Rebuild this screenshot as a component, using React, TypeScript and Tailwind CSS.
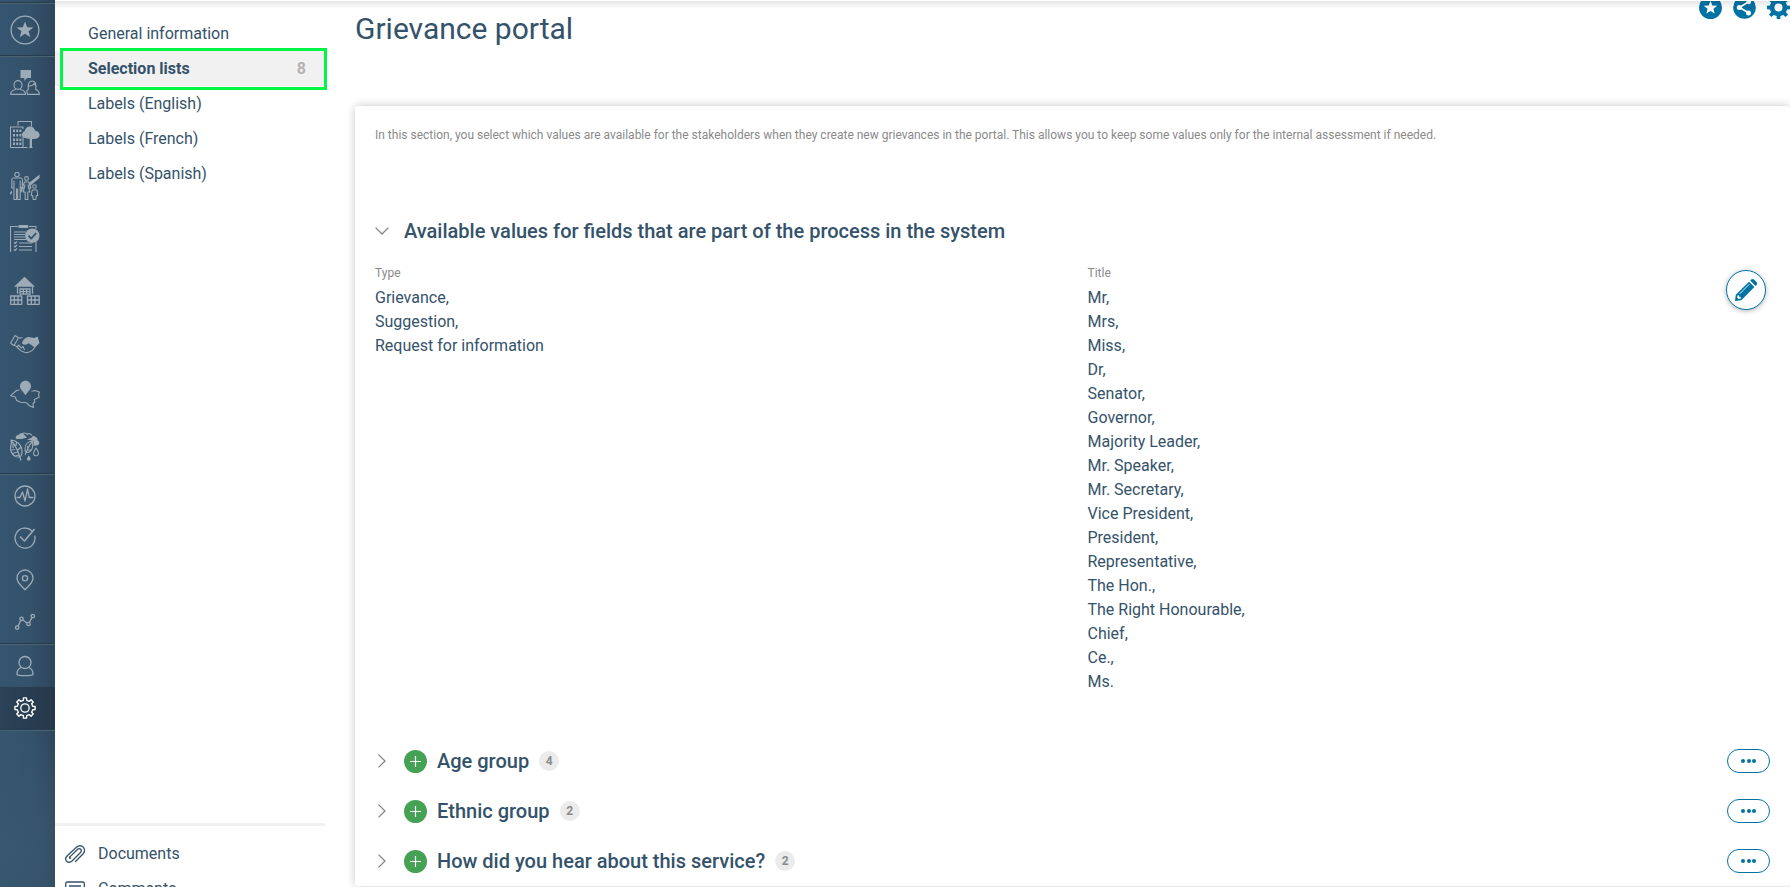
import { useState } from 'react';
import type { ReactNode } from 'react';
import clsx from 'clsx';

const railModules: { id: string; icon: ReactNode }[] = [
  {
    id: 'stakeholders',
    icon: (
      <>
        <path d="M10.5 2h10.5v8h-4l-2.6 3V10h-3.900z" fill="currentColor" stroke="none" />
        <ellipse cx="8" cy="17" rx="4" ry="4.400" />
        <path d="M.6 26.400c0-3.200 2-4.300 5.400-5.200M10 21.200c3.500.9 5.600 2 5.600 5.200H.6" />
        <path d="M18.500 21.500c-.8-4.600 0-8.500 3.600-8.500s4.500 4 3.600 8.500c2 .6 3.600 2 3.600 4.900H17.500c0-1.500-.4-2.800-1-3.700M16.500 22.700l2-1.200M18.500 18c3 .2 5-1 5.600-2.600.4 1.500 1 2 1.700 2.600" />
      </>
    ),
  },
  {
    id: 'environment',
    icon: (
      <>
        <path d="M8 5.500V1.500h13.500v5M.5 27.500V7h12.500v2M.5 27.500h17M13 16v11" />
        <path d="M3 9.500h2v2.500H3zM6.200 9.500h2v2.500h-2zM9.400 9.500h2v2.500h-2zM3 14h2v2.500H3zM6.200 14h2v2.500h-2zM9.400 14h2v2.500h-2zM3 18.500h2v2.500H3zM6.200 18.500h2v2.500h-2zM9.400 18.500h2v2.500h-2zM3 22.500h2v2.500H3zM6.200 22.500h2v2.500h-2zM9.400 22.500h2v2.500h-2z" fill="currentColor" stroke="none" />
        <path d="M12 14.500c-.2-2 2-2.800 2.800-3.500.2-2.500 2.600-4.400 5.200-4.400 2.800 0 4.600 1.600 5 4.200 2.600 0 4.600 2.200 4.600 4.200 0 2.600-2.400 4-7.600 4v7.500c0 .8.400 1 1.200 1.500h-4.700c.8-.5 1.200-.7 1.200-1.500V18.500c-3.700.8-7.700-1-7.700-4z" fill="currentColor" stroke="none" />
      </>
    ),
  },
  {
    id: 'community',
    icon: (
      <>
        <circle cx="7" cy="2.500" r="2.200" />
        <path d="M3 6h8c1 0 1.400 1 1.400 2v7.500h-2.200V9v18.500H7.700V17H6.500v10.500H4V9v7H1.800V8c0-1 .4-2 1.200-2z" />
        <circle cx="16.500" cy="6.500" r="1.900" />
        <path d="M14.500 10h4.200l2.200 6-1.500.6L18 13l1.800 7h-2v7.500h-2.600V20h-2l1.700-7-1.300 3.600-1.500-.6z" />
        <circle cx="24.500" cy="14.500" r="1.800" />
        <path d="M22.200 18h4.800l.8 5.500h-1.500l-.5 4h-2.600l-.5-4h-1.500z" />
        <path d="M0 20.500l2-2v2.500L.5 23zM29.500 2.500v3.500L20 14l-1-3zM10.500 17l2-2v4l-2 2z" fill="currentColor" stroke="none" />
      </>
    ),
  },
  {
    id: 'compliance',
    icon: (
      <>
        <path d="M.5 28V2.500h7.500M18.500 2.500H26V5M26 17v11M4 8h12M4 10.500h11M4 13h11M4 15.500h12M9 19h13M9 22.500h13M9 26h13M4 18.500l1 1 2-2M4 22l1 1 2-2M4 25.500l1 1 2-2" />
        <path d="M8.500 1h9.500v3H8.500z" fill="currentColor" stroke="none" />
        <circle cx="22.300" cy="11.700" r="7.200" fill="currentColor" stroke="none" />
        <path d="M18.500 11.700l2.700 2.900 5-5.600" stroke="#34526a" strokeWidth="1.800" />
      </>
    ),
  },
  {
    id: 'housing',
    icon: (
      <>
        <path d="M14.500.8L25 10.800H4z" fill="currentColor" stroke="none" />
        <path d="M7.500 10.800v7M22.500 10.800v7M10 13h10v5.200H10zM13.300 13v5M16.600 13v5M10 15.600h10M.7 20h11v8.300H.7zM4.300 20v8.300M8 20v8.300M.7 24h11M17.500 20h11.700v8.300H17.500zM21.300 20v8.300M25 20v8.300M17.500 24h11.700" strokeWidth="1.300" />
      </>
    ),
  },
  {
    id: 'agreements',
    icon: (
      <>
        <path d="M5 7.500l3.500 2.300-4.500 7.700-3.400-2.200zM8.500 10l4-.2M4.500 17.300c2 .6 3 2.500 5 4.300 2.400 2 5.200 3.500 7.400 3 3-.5 6.800-2.700 7.800-5.700M7 19l2-2 2 3 2-1.500 1.500 3.500" />
        <path d="M12 15.500c.5-3.500 3.500-6 6.500-6.500l6 1 3-1.500 2 6.500-4.500 4.500-6.300-4.200c-2 1.600-4.500 2-6.700.2z" fill="currentColor" stroke="none" />
      </>
    ),
  },
  {
    id: 'land',
    icon: (
      <>
        <path d="M9.500 10l-3 .5-5.800 5.200 4.500 1.300 1.500 3.500 3.800 1.800 6 .5 3 3 4 1.700-.5-4 1.800-1.500-.5-2.500 4.800-2.300-.5-3 .7-2.200-4.300-1.500-3.500.7" />
        <path d="M15.500.8c3.300 0 5.500 2.500 5.500 5.500 0 3.700-3.500 5.500-5.500 9-2-3.500-5.500-5.300-5.500-9 0-3 2.200-5.500 5.500-5.500z" fill="currentColor" stroke="none" />
      </>
    ),
  },
  {
    id: 'biodiversity',
    icon: (
      <>
        <path d="M1 8c5.500.5 11 4.500 11 11.500 0 3.500-1.500 5.500-3.500 5.500C3 25 .2 20 .6 15.500.8 12.500 2 11 1 8zM1.500 9c4 4 7 11 9.500 19.500M3 12v4M6 14l.5-4M5 17.500l-3.500.5M7.500 20l-5 1.500M8 18l3-3M9 23l-4 1" strokeWidth="1.200" />
        <path d="M22.500 9c-4.500.5-7.500 3.500-7.500 7.500 0 2.500 1 4 2 4 4 0 6.500-3.500 5.500-11.500zM22 10c-3 3-5 8-7 13M17 14l1 2M18 18h3" />
        <path d="M6 7c-1-2 .5-4 2.500-4C10 .8 12.500.8 14 2.500L17 5.500 12 7zM17 7.500l4-1.500 2-2c3 0 5 2.500 4.500 4.500 2.500.5 2.500 4.500-.5 5l-3.500.3V9zM18.800 23.500c-1 1.500-1.800 2.400-1.800 3.500a1.800 1.800 0 003.600 0c0-1.100-.8-2-1.800-3.500z" fill="currentColor" stroke="none" />
        <path d="M12 2c2-1.800 4-1 5 .3 1.500-1.200 4-.8 5 1.200M26 16c-1.500 2.500-2.500 3.700-2.500 5.300a2.500 2.500 0 005 0c0-1.600-1-2.800-2.500-5.300z" />
      </>
    ),
  },
];

const railTools: { id: string; icon: ReactNode }[] = [
  {
    id: 'monitoring',
    icon: (
      <>
        <circle cx="11" cy="11" r="10" />
        <path d="M2.500 12.500H6L8.500 7l2.500 9 2.500-12 1.800 8.500h4" />
      </>
    ),
  },
  {
    id: 'tasks',
    icon: (
      <>
        <path d="M18.300 4.200A10 10 0 1020.700 8.500" />
        <path d="M6 9.500l4.500 4.500L20.500 2" strokeWidth="1.500" />
      </>
    ),
  },
  {
    id: 'locations',
    icon: (
      <>
        <path d="M11 20.800c-2-2.800-8-6.300-8-11.800a8 8 0 0116 0c0 5.500-6 9-8 11.800z" />
        <circle cx="11" cy="9.300" r="2.600" />
      </>
    ),
  },
  {
    id: 'analytics',
    icon: (
      <>
        <circle cx="3.200" cy="16.500" r="1.700" />
        <circle cx="7.500" cy="7.800" r="1.700" />
        <circle cx="14.500" cy="13" r="1.700" />
        <circle cx="18.800" cy="5" r="1.700" />
        <path d="M4 15l2.800-5.500M9 9l4 3M15.300 11.500L18 6.600" />
      </>
    ),
  },
];

function RailIcon({ children, small }: { children: ReactNode; small?: boolean }) {
  return (
    <svg
      viewBox={small ? '0 0 22 22' : '0 0 30 30'}
      className={small ? 'h-[22px] w-[22px]' : 'h-[30px] w-[30px]'}
      fill="none"
      stroke="currentColor"
      strokeWidth={small ? 1.3 : 1.1}
      strokeLinejoin="round"
    >
      {children}
    </svg>
  );
}

function RailDivider() {
  return <div className="h-0.5 shrink-0 border-t border-t-[#263c4f] border-b border-b-[#4b626f]"></div>;
}

function gearPath(cx: number, cy: number, inner: number, outer: number, teeth: number) {
  const points: string[] = [];
  for (let i = 0; i < teeth; i++) {
    const base = (i / teeth) * Math.PI * 2 - Math.PI / 2;
    const half = Math.PI / teeth;
    [
      [inner, -half * 0.55],
      [outer, -half * 0.38],
      [outer, half * 0.38],
      [inner, half * 0.55],
    ].forEach(([r, offset]) => {
      points.push(`${(cx + r * Math.cos(base + offset)).toFixed(2)} ${(cy + r * Math.sin(base + offset)).toFixed(2)}`);
    });
  }
  return `M${points.join('L')}Z`;
}

function Rail() {
  return (
    <aside className="flex h-full w-[55px] shrink-0 flex-col bg-[linear-gradient(90deg,#355470_0%,#34526a_55%,#2e455c_100%)] text-[#9dabb6]">
      <div className="h-0.5"></div>
      <RailDivider />
      <div className="flex h-[51px] w-[50px] items-center justify-center">
        <RailIcon>
          <circle cx="15" cy="15" r="13.900" strokeWidth="1.300" />
          <path d="M15 6.500l2.200 5.800 6.200.2-4.900 3.800 1.800 6-5.300-3.500-5.300 3.500 1.800-6-4.900-3.800 6.200-.2z" fill="currentColor" stroke="none" />
        </RailIcon>
      </div>
      <RailDivider />
      <div className="flex flex-col">
        {railModules.map((item) => (
          <div key={item.id} className="flex h-[52px] w-[50px] items-center justify-center">
            <RailIcon>{item.icon}</RailIcon>
          </div>
        ))}
      </div>
      <RailDivider />
      <div className="flex flex-col">
        {railTools.map((item) => (
          <div key={item.id} className="flex h-[42px] w-[50px] items-center justify-center">
            <RailIcon small>{item.icon}</RailIcon>
          </div>
        ))}
      </div>
      <RailDivider />
      <div className="flex h-[42px] w-[50px] items-center justify-center">
        <RailIcon small>
          <circle cx="11" cy="7.500" r="6" />
          <path d="M7 12.500c-2.500 1.200-4 3.500-4 6.500 0 .8.500 1 1.200 1.100 4.500.7 9.100.7 13.600 0 .7-.1 1.200-.3 1.200-1.100 0-3-1.500-5.300-4-6.500" />
        </RailIcon>
      </div>
      <div className="h-[42px] bg-[linear-gradient(90deg,#2b4258,#26394a)] text-white">
        <div className="flex h-full w-[50px] items-center justify-center">
          <RailIcon small>
            <path d={gearPath(11, 11, 7.9, 10.2, 8)} strokeWidth="1.400" />
            <circle cx="11" cy="11" r="4.200" strokeWidth="1.300" />
          </RailIcon>
        </div>
      </div>
      <RailDivider />
      <div className="flex-1 bg-[radial-gradient(circle_at_0%_75%,#38586f_0%,transparent_100%)]"></div>
    </aside>
  );
}

const navItems: { label: string; count?: number }[] = [
  { label: 'General information' },
  { label: 'Selection lists', count: 8 },
  { label: 'Labels (English)' },
  { label: 'Labels (French)' },
  { label: 'Labels (Spanish)' },
];

function SideNav() {
  const [active, setActive] = useState('Selection lists');

  return (
    <div className="flex h-full w-[270px] shrink-0 flex-col">
      <nav className="flex flex-1 flex-col pt-4">
        {navItems.map((item) => (
          <button
            key={item.label}
            onClick={() => setActive(item.label)}
            className={clsx(
              'relative flex h-[35px] shrink-0 items-center justify-between pr-[19px] pl-[33px] text-left text-base',
              active === item.label && 'bg-[#f1f1f1] font-bold'
            )}
          >
            <span>{item.label}</span>
            {item.count && <span className="font-bold text-[#b3b3b3]">{item.count}</span>}
            {active === item.label && (
              <span className="absolute -top-[3px] -right-[2px] -bottom-[4px] left-[5px] border-3 border-[#00f545]"></span>
            )}
          </button>
        ))}
      </nav>
      <div className="h-16 shrink-0 overflow-hidden border-t-3 border-[#f1f1f1] pt-2.5">
        <div className="flex h-[35px] items-center gap-[13px] pl-2.5 text-base">
          <svg viewBox="0 0 20 18" className="h-[18px] w-5" fill="none" stroke="currentColor" strokeWidth="1.300" strokeLinecap="round">
            <path d="M10.500 16.500l7.200-7.300c2-2.100 2.300-5 .7-6.900-1.800-2.100-4.900-2-7-.1L2.300 10.800C.5 12.600.3 14.800 1.600 16.200c1.400 1.500 3.700 1.400 5.400-.2l8.300-8.300c1.200-1.200 1.400-2.500.5-3.400-.9-1-2.300-.9-3.400.2l-7.500 7.400" />
            <path d="M4.900 11.900c-1 1.100-.2 2 .8 1.200" />
          </svg>
          <span>Documents</span>
        </div>
        <div className="flex h-[35px] items-center gap-[13px] pl-2.5 text-base">
          <svg viewBox="0 0 20 18" className="h-[18px] w-5 translate-y-px" fill="none" stroke="currentColor" strokeWidth="1.300">
            <path d="M2.200 1h15.600a1.500 1.500 0 011.500 1.500v9.500a1.500 1.500 0 01-1.500 1.500H9l-4 3.500v-3.500H2.200A1.500 1.500 0 01.7 12V2.500A1.500 1.500 0 012.200 1zM4 5h12M4 8.500h12" />
          </svg>
          <span>Comments</span>
        </div>
      </div>
    </div>
  );
}

const types = ['Grievance', 'Suggestion', 'Request for information'];

const titles = [
  'Mr',
  'Mrs',
  'Miss',
  'Dr',
  'Senator',
  'Governor',
  'Majority Leader',
  'Mr. Speaker',
  'Mr. Secretary',
  'Vice President',
  'President',
  'Representative',
  'The Hon.',
  'The Right Honourable',
  'Chief',
  'Ce.',
  'Ms.',
];

const groups = [
  { name: 'Age group', count: 4 },
  { name: 'Ethnic group', count: 2 },
  { name: 'How did you hear about this service?', count: 2 },
];

function ValueList({ label, values }: { label: string; values: string[] }) {
  return (
    <div>
      <div className="h-[25px] text-xs leading-[25px] text-[#8a8a8a]">{label}</div>
      <ul className="text-base leading-6">
        {values.map((value, i) => (
          <li key={value}>{i < values.length - 1 ? `${value},` : value}</li>
        ))}
      </ul>
    </div>
  );
}

function HeaderActions() {
  return (
    <div className="flex gap-[11px] text-[#0072a3]">
      <svg viewBox="0 0 23 23" className="h-[23px] w-[23px]">
        <circle cx="11.500" cy="11.500" r="11.500" fill="currentColor" />
        <path d="M11.500 4.800l1.800 4.600 5 .3-3.900 3.100 1.300 4.800-4.200-2.700-4.200 2.700 1.300-4.800-3.900-3.100 5-.3z" fill="#fff" />
      </svg>
      <svg viewBox="0 0 23 23" className="h-[23px] w-[23px]">
        <circle cx="11.500" cy="11.500" r="11.300" fill="currentColor" />
        <path d="M16 5.500l-9.500 6L16 17" fill="none" stroke="#fff" strokeWidth="1.800" />
        <circle cx="15.800" cy="5.800" r="2.400" fill="#fff" />
        <circle cx="6.300" cy="11.500" r="2.500" fill="#fff" />
        <circle cx="15.500" cy="17" r="2.500" fill="#fff" />
      </svg>
      <svg viewBox="0 0 23 23" className="h-[23px] w-[23px]">
        <path d={gearPath(11.5, 11.5, 8.8, 11.9, 8)} fill="currentColor" />
        <circle cx="11.500" cy="11.500" r="4" fill="#fff" />
      </svg>
    </div>
  );
}

export default function App() {
  return (
    <div className="relative flex h-[887px] w-full overflow-hidden bg-white font-['Roboto',sans-serif] text-[#34526a]">
      <Rail />
      <SideNav />

      <main className="flex min-w-0 flex-1 flex-col pl-[30px]">
        <header className="flex h-[106px] shrink-0 items-start justify-between">
          <h1 className="pt-[9px] text-[30px] leading-10">Grievance portal</h1>
          <div className="-mt-1 mr-[0.5px]">
            <HeaderActions />
          </div>
        </header>

        <section className="flex h-[780px] shrink-0 flex-col rounded-[3px] bg-white pl-5 shadow-[0_0_10px_rgba(0,0,0,0.22)]">
          <p className="pt-5 text-xs leading-[18px] text-[#8a8a8a]">
            In this section, you select which values are available for the stakeholders when they create new grievances in the portal. This allows you to keep some values only for the internal assessment if needed.
          </p>

          <div className="mt-[62px] flex h-[50px] items-center gap-[15px]">
            <svg viewBox="0 0 14 8" className="h-2 w-3.5" fill="none" stroke="#858585" strokeWidth="1.300">
              <path d="M.6.6L7 7 13.400.6" />
            </svg>
            <h2 className="text-xl font-medium">Available values for fields that are part of the process in the system</h2>
          </div>

          <div className="mt-[5px] flex">
            <div className="w-[712.5px]">
              <ValueList label="Type" values={types} />
            </div>
            <div className="flex-1">
              <ValueList label="Title" values={titles} />
            </div>
            <button className="mt-[9px] mr-6 flex h-10 w-10 items-center justify-center rounded-full border border-[#0072a3] bg-white text-[#0072a3] shadow-[0_1px_5px_rgba(0,0,0,0.3)]">
              <svg viewBox="0 0 24 24" className="h-6 w-6" fill="currentColor">
                <path d="M16.200 2.600l1-1c.8-.8 2-.8 2.800 0l2.500 2.500c.8.800.8 2 0 2.800l-1 1z" />
                <path fillRule="evenodd" d="M15 3.700l5.400 5.400L7.300 22.200 1 23l.8-6.200zM3.400 17.600l-.3 1.800 1.600 1.600 1.900-.3.200-1.800-1.600-.2-.1-1.500z" />
                <path d="M5.500 16L15.300 6.200" stroke="#fff" strokeWidth=".9" />
              </svg>
            </button>
          </div>

          <div className="mt-auto">
            {groups.map((group) => (
              <div key={group.name} className="flex h-[50px] items-center pr-5">
                <svg viewBox="0 0 14 14" className="h-3.5 w-3.5" fill="none" stroke="#858585" strokeWidth="1.300">
                  <path d="M3.500.6L10 7l-6.500 6.400" />
                </svg>
                <span className="ml-[15px] flex h-[23px] w-[23px] items-center justify-center rounded-full bg-[#45a153]">
                  <svg viewBox="0 0 11 11" className="h-[11px] w-[11px]" stroke="#fff" strokeWidth="1.200">
                    <path d="M5.500 0v11M0 5.500h11" />
                  </svg>
                </span>
                <h3 className="ml-2.5 text-xl font-medium">{group.name}</h3>
                <span className="ml-2.5 flex h-5 w-5 items-center justify-center rounded-full bg-[#ebebeb] text-xs font-bold text-[#8a8a8a]">
                  {group.count}
                </span>
                <button className="ml-auto flex h-6 w-[43px] items-center justify-center gap-[1.5px] rounded-full border border-[#0072a3] bg-white">
                  <i className="h-1 w-1 rounded-full bg-[#0072a3]"></i>
                  <i className="h-1 w-1 rounded-full bg-[#0072a3]"></i>
                  <i className="h-1 w-1 rounded-full bg-[#0072a3]"></i>
                </button>
              </div>
            ))}
          </div>
        </section>
      </main>

      {/* Edge of the app bar lying over the scrolled content */}
      <div className="pointer-events-none absolute top-0 right-0 left-[55px]">
        <div className="h-px bg-white"></div>
        <div className="h-2 bg-gradient-to-b from-black/10 to-transparent"></div>
      </div>
    </div>
  );
}
